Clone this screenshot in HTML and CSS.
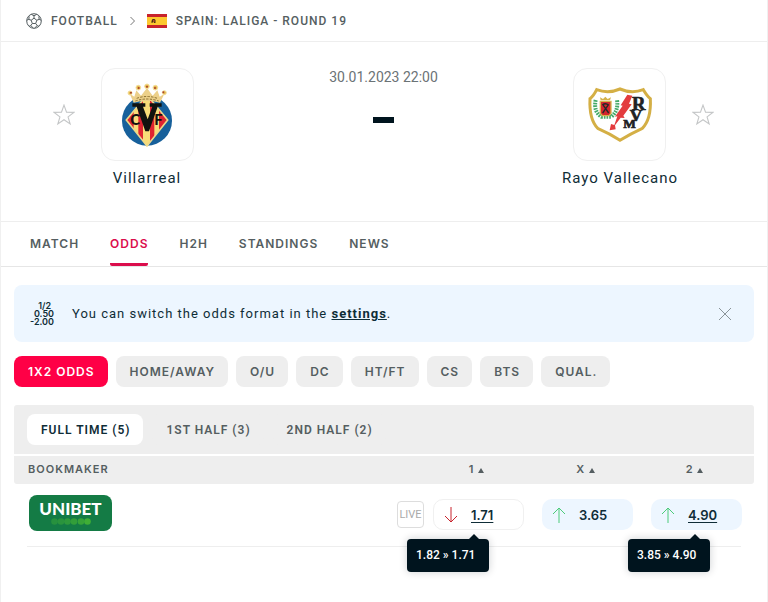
FILE: index.html
```html
<!DOCTYPE html>
<html lang="en">
<head>
  <meta charset="UTF-8" />
  <meta name="viewport" content="width=device-width, initial-scale=1.0"/>
  <title>Villarreal - Rayo Vallecano odds</title>
  <link rel="stylesheet" href="styles.css">
</head>
<body>
  <div class="page">
    <nav class="breadcrumb" aria-label="Breadcrumb">
      <svg class="ball" viewBox="0 0 16 16"><circle cx="8" cy="8" r="7.3"/><path d="M8 5.2l2.8 2-1.1 3.3H6.3L5.2 7.2zM8 5.2V2.8M10.8 7.2l2.4-.8M9.7 10.5l1.5 2.1M6.3 10.5l-1.5 2.1M5.2 7.2l-2.4-.8M5.2 1.3L8 2.8l2.8-1.5M15.2 7.2l-2-.8-.4-3M12.8 13.2l-1.6-.6-2.6 2.5M3.2 13.2l1.6-.6 2.6 2.5M.8 7.2l2-.8.4-3"/></svg>
      <a href="#football">FOOTBALL</a>
      <svg class="chevron" viewBox="0 0 6 10"><path d="M1 1l4 4-4 4"/></svg>
      <svg class="flag" viewBox="0 0 20 14"><path fill="#c8232c" d="M0 0h20v14H0z"/><path fill="#fdc82f" d="M0 3h20v8H0z"/><path fill="#4d3012" d="M4.500 9V7l1-2h2l1 1v3H7V8z"/><path fill="#b5502a" d="M6 6h1.500v2H6z"/></svg>
      <a href="#laliga">SPAIN: LALIGA - ROUND 19</a>
    </nav>

    <section class="match">
      <div class="team home">
        <button class="star" aria-label="Add Villarreal to favourites"><svg viewBox="0 0 20 20"><path d="M10 1l2.300 6.400 6.700.2-5.300 4.100 1.900 6.500L10 14.300l-5.600 3.900 1.900-6.500L1 7.600l6.700-.2z"/></svg></button>
        <div class="club">
          <div class="crest">
            <svg width="60" height="70" viewBox="232 60 180 210">
              <circle cx="322" cy="182" r="75" fill="#17609b"/>
              <clipPath id="diamond"><path d="M322 105l62 75-62 78-62-78z"/></clipPath>
              <g clip-path="url(#diamond)">
                <path fill="#f8dc78" d="M255 100h134v160H255z"/>
                <path fill="#df2431" d="M262 100h20v160h-20zM296 100h14v160h-14zM331 100h13v160h-13zM358 100h24v160h-24z"/>
              </g>
              <path d="M322 105l62 75-62 78-62-78z" fill="none" stroke="#edd889" stroke-width="5"/>
              <path d="M278 130h39v10h-7l14 38 14-38h-8v-10h36v10h-12l-26 74h-11l-26-74h-13z" fill="#11120f"/>
              <text x="272" y="195" class="crest-text" font-size="44">C</text>
              <text x="344" y="195" class="crest-text" font-size="44">F</text>
              <path d="M282 128l-12-27 14 9 6-19 14 16 18-23 17 23 14-16 7 19 14-8-13 26q-40-11-79 0z" fill="#ecd08a"/>
              <path d="M291 115q31-11 62 0M287 123q35-12 70 0" fill="none" stroke="#8a7030" stroke-width="3" stroke-dasharray="7 4"/>
              <g fill="#e5b94f" stroke="#f4df9c" stroke-width="3"><circle cx="271" cy="99" r="6"/><circle cx="296" cy="83" r="7"/><circle cx="322" cy="79" r="7"/><circle cx="347" cy="83" r="7"/><circle cx="374" cy="98" r="6"/></g>
              <g fill="#a9442b"><circle cx="274" cy="98" r="3"/><circle cx="297" cy="84" r="3"/><circle cx="322" cy="80" r="3"/><circle cx="346" cy="84" r="3"/><circle cx="371" cy="97" r="3"/></g>
            </svg>
          </div>
          <div class="name">Villarreal</div>
        </div>
      </div>

      <div class="info">
        <time datetime="2023-01-30T22:00">30.01.2023 22:00</time>
        <div class="dash"></div>
      </div>

      <div class="team away">
        <div class="club">
          <div class="crest">
            <svg width="70" height="64" viewBox="135 67 210 192">
              <path d="M170 87q35 13 70-2 35 15 70 2 12 20 21 27 3 62-24 89-33 15-67 36-32-21-67-36-26-27-23-89 10-7 20-27z" fill="#fff" stroke="#d4af45" stroke-width="9"/>
              <path d="M167 118q-7 35 17 50h30q22-17 17-50" fill="none" stroke="#43a968" stroke-width="12" stroke-dasharray="5 3"/>
              <path d="M181 122h32v36l-6 7h-20l-6-7z" fill="#d3262d" stroke="#d5b34b" stroke-width="4"/>
              <path d="M182 119l-2-9 9 5 7-7 7 7 10-5-3 9z" fill="#d5b34b"/>
              <path d="M188 157l18-26M206 157l-18-26M187 133q10-8 19 1" fill="none" stroke="#242728" stroke-width="4"/>
              <path d="M262 102l15 3-10 24 8 2-25 34 4 7-12-1-17 23 2 12-18 3 4-19 10 3 9-26-7 1 23-33-6-1z" fill="#e33b3e"/>
              <g class="crest-serif">
                <text x="276" y="148" font-size="56">R</text>
                <text x="269" y="181" font-size="52">V</text>
                <text x="250" y="203" font-size="40">M</text>
              </g>
            </svg>
          </div>
          <div class="name">Rayo Vallecano</div>
        </div>
        <button class="star" aria-label="Add Rayo Vallecano to favourites"><svg viewBox="0 0 20 20"><path d="M10 1l2.300 6.400 6.700.2-5.300 4.100 1.900 6.500L10 14.300l-5.600 3.900 1.900-6.500L1 7.600l6.700-.2z"/></svg></button>
      </div>
    </section>

    <nav class="tabs" aria-label="Match sections">
      <a href="#match">MATCH</a>
      <a href="#odds" class="active">ODDS</a>
      <a href="#h2h">H2H</a>
      <a href="#standings">STANDINGS</a>
      <a href="#news">NEWS</a>
    </nav>

    <main class="odds">
      <div class="notice">
        <div class="formats"><span>1/2</span><span>0.50</span><span>-2.00</span></div>
        <p>You can switch the odds format in the <a href="#settings">settings</a>.</p>
        <button class="close" aria-label="Close"><svg viewBox="0 0 14 14"><path d="M1 1l12 12M13 1L1 13"/></svg></button>
      </div>

      <div class="filters">
        <button class="pill active">1X2 ODDS</button>
        <button class="pill">HOME/AWAY</button>
        <button class="pill">O/U</button>
        <button class="pill">DC</button>
        <button class="pill">HT/FT</button>
        <button class="pill">CS</button>
        <button class="pill">BTS</button>
        <button class="pill">QUAL.</button>
      </div>

      <div class="periods">
        <button class="pill active">FULL TIME (5)</button>
        <button class="pill">1ST HALF (3)</button>
        <button class="pill">2ND HALF (2)</button>
      </div>

      <table>
        <thead>
          <tr>
            <th class="bookmaker" colspan="2">BOOKMAKER</th>
            <th class="price">1 <span class="sort"></span></th>
            <th class="price">X <span class="sort"></span></th>
            <th class="price">2 <span class="sort"></span></th>
          </tr>
        </thead>
        <tbody>
          <tr>
            <td class="bookmaker">
              <a href="#unibet" class="unibet">UNIBET
                <svg viewBox="0 0 40 7"><g fill="#3fae35"><circle cx="3.500" cy="3.500" r="3.300" opacity=".45"/><circle cx="10" cy="3.500" r="3.300" opacity=".5"/><circle cx="16.500" cy="3.500" r="3.300" opacity=".6"/><circle cx="23" cy="3.500" r="3.300" opacity=".7"/><circle cx="30" cy="3.500" r="3.300" opacity=".8"/><circle cx="36.500" cy="3.500" r="3.300"/></g></svg>
              </a>
            </td>
            <td class="live"><span>LIVE</span></td>
            <td class="price">
              <button class="odd plain down"><svg viewBox="0 0 14 16"><path d="M7 0v15M1 9l6 6 6-6"/></svg><u>1.71</u></button>
              <div class="tip">1.82 <i>»</i> 1.71</div>
            </td>
            <td class="price">
              <button class="odd up"><svg viewBox="0 0 14 16"><path d="M7 16V1M1 7l6-6 6 6"/></svg><span>3.65</span></button>
            </td>
            <td class="price">
              <button class="odd up"><svg viewBox="0 0 14 16"><path d="M7 16V1M1 7l6-6 6 6"/></svg><u>4.90</u></button>
              <div class="tip">3.85 <i>»</i> 4.90</div>
            </td>
          </tr>
        </tbody>
      </table>
    </main>
  </div>
</body>
</html>
```
FILE: styles.css
```css
* {
  margin: 0; padding: 0; box-sizing: border-box;
}
body {
  font-family: Roboto, sans-serif;
  background: #fff;
  color: #0f2d37;
}
button {
  font: inherit;
  color: inherit;
  letter-spacing: inherit;
  background: none;
  border: 0;
  cursor: pointer;
}
a { color: inherit; text-decoration: none; }
svg { display: block; flex: none; }
.page {
  min-height: 100vh;
  border: solid #f0f0f0;
  border-width: 0 1px;
}

/* breadcrumb */
.breadcrumb {
  display: flex;
  align-items: center;
  height: 42px;
  padding: 0 25px;
  border-bottom: 1px solid #eee;
  font-size: 12px;
  font-weight: 500;
  letter-spacing: 1px;
  color: #555e61;
}
.ball {
  width: 16px; height: 16px;
  margin-right: 9px;
  fill: none;
  stroke: #555e61;
}
.chevron {
  width: 7px; height: 10px;
  margin: 0 11px;
  fill: none;
  stroke: #777;
}
.flag {
  width: 20px; height: 14px;
  margin-right: 9px;
}

/* teams */
.match {
  display: grid;
  grid-template-columns: 1fr 1fr 1fr;
  height: 180px;
  padding: 26px 41px 0 40px;
  border-bottom: 1px solid #eee;
}
.team { display: flex; }
.away { justify-content: flex-end; }
.star {
  width: 46px; height: 93px;
  display: flex;
  align-items: center;
  justify-content: center;
}
.star svg {
  width: 22px; height: 22px;
  fill: none;
  stroke: #c4c6c7;
}
.club {
  display: flex;
  flex-direction: column;
  align-items: center;
  width: 120px;
}
.crest {
  display: flex;
  align-items: center;
  justify-content: center;
  width: 93px; height: 93px;
  border: 1px solid #f0f0f0;
  border-radius: 14px;
}
.crest-text { font-family: Lato, sans-serif; font-weight: 900; fill: #11120f; }
.crest-serif {
  font-family: "Liberation Serif", serif;
  font-weight: 700;
  fill: #202224;
  stroke: #202224;
  stroke-width: 2;
}
.name {
  margin-top: 7px;
  font-size: 15px;
  line-height: 20px;
  letter-spacing: 1px;
  white-space: nowrap;
}
.info {
  display: flex;
  flex-direction: column;
  align-items: center;
}
time {
  font-size: 14px;
  line-height: 18px;
  color: #6b7376;
}
.dash {
  width: 21px; height: 6px;
  margin-top: 31px;
  background: #00141e;
}

/* sections */
.tabs {
  display: flex;
  gap: 31px;
  height: 45px;
  padding: 0 29px;
  border-bottom: 1px solid #e6e6e6;
  font-family: Inter, sans-serif;
  font-size: 12px;
  font-weight: 600;
  letter-spacing: 1px;
  line-height: 44px;
  color: #555e61;
}
.tabs .active {
  color: #db0d4c;
  border-bottom: 3px solid #db0d4c;
  border-radius: 2px;
}

.odds { padding: 18px 13px; }
.notice {
  display: flex;
  align-items: center;
  height: 57px;
  margin-bottom: 14px;
  padding: 0 20px 0 16px;
  background: #edf6ff;
  border-radius: 8px;
  font-size: 13px;
  letter-spacing: 1px;
}
.notice a {
  font-weight: 700;
  text-decoration: underline;
}
.formats {
  display: flex;
  flex-direction: column;
  align-items: flex-end;
  width: 24px;
  margin-right: 18px;
  font-family: Inter, sans-serif;
  font-size: 9px;
  font-weight: 600;
  line-height: 8px;
  letter-spacing: 0;
}
.formats span:first-child { padding-right: 3px; }
.close { margin-left: auto; padding: 2px; }
.close svg {
  width: 14px; height: 14px;
  fill: none;
  stroke: #8a9499;
}

.filters {
  display: flex;
  flex-wrap: wrap;
  gap: 8px;
  margin-bottom: 18px;
}
.pill {
  height: 31px;
  padding: 0 13px 0 14px;
  border-radius: 8px;
  background: #eee;
  font-size: 12px;
  font-weight: 600;
  letter-spacing: 1px;
  color: #555e61;
}
.filters .pill { font-family: Inter, sans-serif; }
.filters .active { background: #ff0046; color: #fff; }
.periods {
  display: flex;
  gap: 9px;
  margin-bottom: 2px;
  padding: 9px 13px;
  background: #eee;
  border-radius: 3px 3px 0 0;
}
.periods .active { background: #fff; color: #0f2d37; }

/* odds table */
table {
  width: 100%;
  table-layout: fixed;
  border-collapse: collapse;
}
th {
  height: 28px;
  padding: 0 4px 2px 0;
  background: #eee;
  font-family: Inter, sans-serif;
  font-size: 11px;
  font-weight: 600;
  letter-spacing: 1px;
  color: #555e61;
}
th.bookmaker { padding-left: 14px; text-align: left; border-radius: 0 0 0 3px; }
th:last-child { border-radius: 0 0 3px 0; }
.price { width: 109px; }
.price:last-child { width: 112px; }
th.price:last-child { padding-right: 7px; }
.sort {
  display: inline-block;
  border: solid transparent;
  border-width: 0 3px 5px;
  border-bottom-color: #555e61;
}
tbody tr {
  background: linear-gradient(#eee, #eee) center bottom / calc(100% - 26px) 1px no-repeat;
}
td { position: relative; height: 63px; padding-bottom: 2px; }
td:last-child { padding-right: 3px; }
td.bookmaker { padding: 0 0 6px 15px; }
.unibet {
  display: flex;
  flex-direction: column;
  align-items: center;
  width: 83px; height: 36px;
  padding-top: 4px;
  background: #147b45;
  border-radius: 8px;
  color: #fff;
  font-family: Lato, sans-serif;
  font-size: 17px;
  font-weight: 900;
  line-height: 19px;
}
.unibet svg { width: 40px; height: 7px; }
.live span {
  display: block;
  width: 27px; height: 27px;
  margin-left: auto;
  border: 1px solid #ddd;
  border-radius: 4px;
  font-size: 11px;
  line-height: 25px;
  text-align: center;
  color: #aaa;
}
.odd {
  display: flex;
  align-items: center;
  width: 91px; height: 31px;
  margin: 0 auto;
  padding-left: 10px;
  border-radius: 10px;
  background: #edf6ff;
  font-family: Inter, sans-serif;
  font-size: 13px;
  font-weight: 600;
}
.odd svg {
  width: 14px; height: 16px;
  margin-right: 13px;
  fill: none;
}
.odd u { text-underline-offset: 2px; }
.plain { background: #fff; border: 1px solid #f0f0f0; }
.up svg { stroke: #4ccb7a; }
.down svg { stroke: #c8232c; }
.tip {
  position: absolute;
  top: 55px;
  right: 44px;
  width: 82px; height: 33px;
  padding-left: 9px;
  background: #00141e;
  border-radius: 4px;
  box-shadow: 0 0 8px rgba(0, 20, 30, 0.2);
  color: #fff;
  font-size: 12px;
  font-weight: 500;
  line-height: 33px;
  white-space: nowrap;
}
.tip i { font-style: normal; }
.tip::before {
  content: "";
  position: absolute;
  top: -5px;
  right: 10px;
  border: solid transparent;
  border-width: 0 5px 5px;
  border-bottom-color: #00141e;
}
```
